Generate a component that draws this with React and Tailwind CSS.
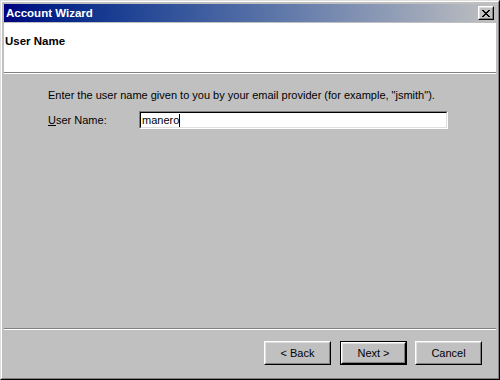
const font = { fontFamily: '"Liberation Sans", Arial, sans-serif' };

const Button = ({ label, isDefault }) => {
  const inner = (
    <div className="h-full w-full border border-t-white border-l-white border-r-black border-b-black">
      <div className="h-full w-full border border-t-[#dfdfdf] border-l-[#dfdfdf] border-r-[#808080] border-b-[#808080] flex items-center justify-center text-[11px] text-black">
        {label}
      </div>
    </div>
  );
  return (
    <div className={`h-[24px] w-[67px] ${isDefault ? 'border border-black' : ''}`}>
      {inner}
    </div>
  );
};

const App = () => {
  return (
    <div style={font} className="w-[500px] h-[380px] border border-t-[#dfdfdf] border-l-[#dfdfdf] border-r-black border-b-black select-none">
      <div className="h-full border border-t-white border-l-white border-r-[#808080] border-b-[#808080] bg-[#c0c0c0] p-[2px] flex flex-col">
        {/* title bar */}
        <div className="h-[18px] shrink-0 bg-linear-to-r from-[#000080] to-[#c0c0c0] flex items-center justify-between pl-[2px] pr-[2px]">
          <span className="text-white font-bold text-[11.5px] leading-[13px]">Account Wizard</span>
          <div className="w-[16px] h-[14px] border border-t-white border-l-white border-r-black border-b-black bg-[#c0c0c0]">
            <div className="h-full w-full border border-t-[#dfdfdf] border-l-[#dfdfdf] border-r-[#808080] border-b-[#808080] flex items-center justify-center">
              <svg width="8" height="7" viewBox="0 0 8 7" shapeRendering="crispEdges">
                <path d="M0 0h2v1h-2zM6 0h2v1h-2zM1 1h2v1h-2zM5 1h2v1h-2zM2 2h4v1h-4zM3 3h2v1h-2zM2 4h4v1h-4zM1 5h2v1h-2zM5 5h2v1h-2zM0 6h2v1h-2zM6 6h2v1h-2z" fill="black" />
              </svg>
            </div>
          </div>
        </div>

        {/* header */}
        <div className="mt-px h-[49px] shrink-0 bg-white pt-[12px] pl-[1px]">
          <div className="font-bold text-[11.5px] leading-[13px] text-black">User Name</div>
        </div>
        <div className="h-[2px] shrink-0 border-t border-t-[#808080] border-b border-b-white" />

        {/* body */}
        <div className="flex-1 pt-[15px] pl-[44px] text-[11px] leading-[13px] text-black">
          <div>Enter the user name given to you by your email provider (for example, "jsmith").</div>
          <div className="mt-[9px] flex items-center">
            <span className="w-[91px]"><span className="underline">U</span>ser Name:</span>
            <div className="w-[309px] h-[18px] border border-t-[#808080] border-l-[#808080] border-r-white border-b-white">
              <div className="h-full w-full border border-t-black border-l-black border-r-[#dfdfdf] border-b-[#dfdfdf] bg-white flex items-center pl-px">
                <span>manero</span>
                <span className="inline-block w-px h-[13px] bg-black" />
              </div>
            </div>
          </div>
        </div>

        {/* footer */}
        <div className="h-[2px] shrink-0 border-t border-t-[#808080] border-b border-b-white" />
        <div className="h-[46px] shrink-0 flex items-center justify-end pr-[14px]">
          <Button label="< Back" />
          <div className="ml-[9px]">
            <Button label="Next >" isDefault />
          </div>
          <div className="ml-[8px]">
            <Button label="Cancel" />
          </div>
        </div>
      </div>
    </div>
  );
};

export default App;
